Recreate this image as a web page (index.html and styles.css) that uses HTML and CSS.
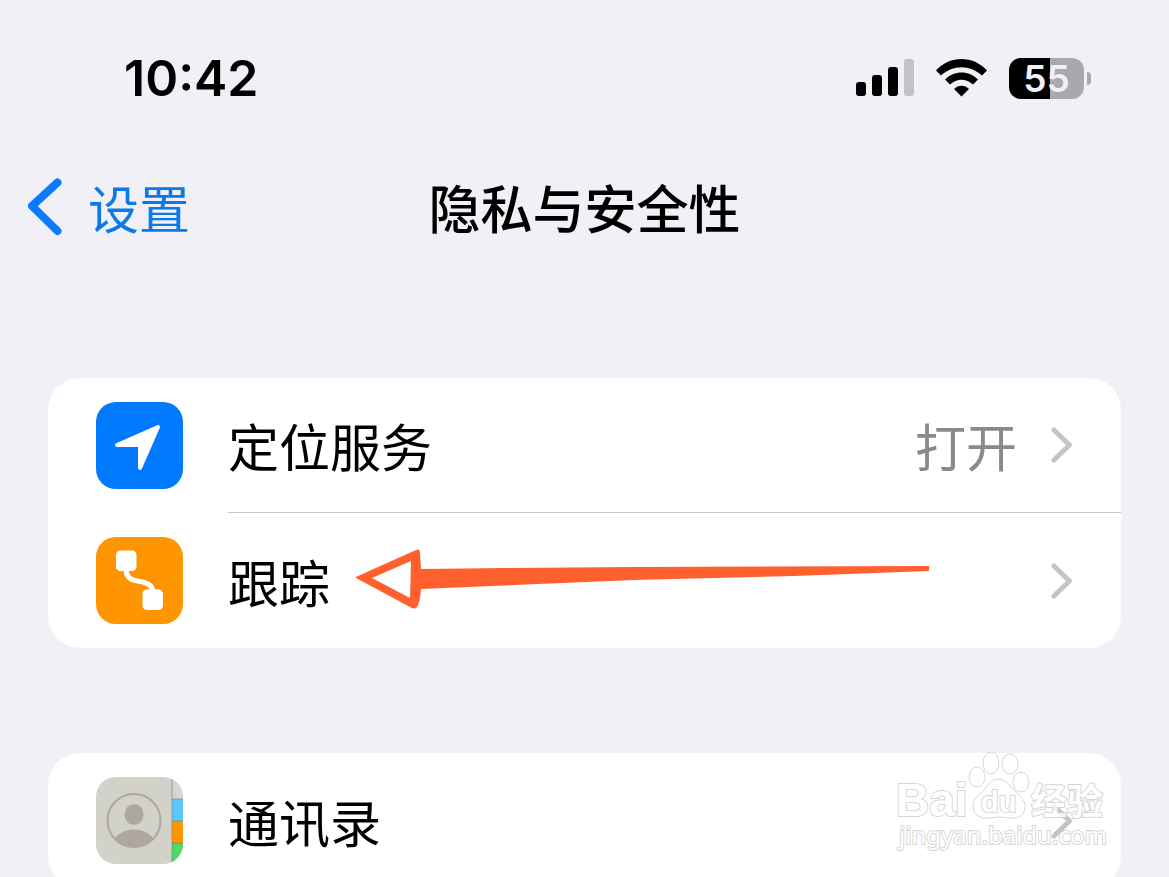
FILE: index.html
```html
<!DOCTYPE html>
<html lang="zh-CN">
  <head>
    <meta charset="utf-8" />
    <meta name="viewport" content="width=device-width, initial-scale=1" />
    <title>隐私与安全性</title>
    <link rel="stylesheet" href="styles.css">
  </head>
  <body>
    <div class="statusbar">
      <span class="time">10:42</span>
      <div class="indicators">
        <svg class="signal" width="58" height="38" viewBox="0 0 58 38">
          <rect x="0" y="23" width="10" height="14" rx="3" />
          <rect x="16" y="16" width="10" height="21" rx="3" />
          <rect x="32" y="8" width="10" height="29" rx="3" />
          <rect class="off" x="48" y="0" width="10" height="37" rx="3" />
        </svg>
        <svg class="wifi" width="51" height="38" viewBox="0 0 51 38">
          <path d="M0 11.500C14 -3.800 37 -3.800 51 11.500L46 16.500C34 5.500 17 5.500 5 16.500Z" />
          <path d="M9 20.500C18 11 33 11 42 20.500L37 25.500C30 19 21 19 14 25.500Z" />
          <path d="M18 30C22 25.500 29 25.500 33 30L25.500 37.500Z" />
        </svg>
        <div class="battery"><span class="level">55</span></div>
      </div>
    </div>

    <header class="navbar">
      <a class="back" href="#">
        <svg width="34" height="58" viewBox="0 0 34 58">
          <path d="M29.500 4.500L4 28L29.500 53" />
        </svg>
        设置
      </a>
      <h1>隐私与安全性</h1>
    </header>

    <main>
      <div class="card">
        <a class="row" href="#">
          <svg class="icon" viewBox="0 0 87 87">
            <rect width="87" height="87" rx="20" fill="#007aff" />
            <path d="M21 43L62 25L44 66V43Z" fill="#fff" stroke="#fff" stroke-width="4" stroke-linejoin="round" />
          </svg>
          <span class="line">
            <span class="label">定位服务</span>
            <span class="value">打开</span>
            <svg class="chevron" viewBox="0 0 22 36"><path d="M3 3L18.500 18L3 33" /></svg>
          </span>
        </a>
        <a class="row" href="#">
          <svg class="icon" viewBox="0 0 87 87">
            <rect width="87" height="87" rx="20" fill="#ff9500" />
            <rect x="20" y="13.500" width="20.500" height="20.500" rx="4.500" fill="#fff" />
            <rect x="46.500" y="52.500" width="20.500" height="20.500" rx="4.500" fill="#fff" />
            <path d="M30 33C31 50 54 39 57 54" fill="none" stroke="#fff" stroke-width="5" />
          </svg>
          <span class="line">
            <span class="label">跟踪</span>
            <svg class="chevron" viewBox="0 0 22 36"><path d="M3 3L18.500 18L3 33" /></svg>
          </span>
          <svg class="arrow" width="576" height="62" viewBox="0 0 576 62">
            <path fill-rule="evenodd" d="M2 30Q1 29 4 28L62 2Q66 0 66 5L67 21L150 20L280 19L575 18V23L440 28L280 32L67 41Q66 55 63 59Q61 62 56 59ZM18 30L56 50L57 13Z" />
          </svg>
        </a>
      </div>

      <div class="card">
        <a class="row" href="#">
          <svg class="icon" viewBox="0 0 87 87">
            <clipPath id="book"><rect width="87" height="87" rx="20" /></clipPath>
            <clipPath id="portrait"><circle cx="38" cy="43.500" r="26.500" /></clipPath>
            <g clip-path="url(#book)">
              <rect width="87" height="87" fill="#d2d1ca" />
              <rect x="76" width="11" height="22" fill="#d6d5d3" />
              <rect x="76" y="22" width="11" height="22" fill="#5ac8fa" />
              <rect x="76" y="44" width="11" height="22" fill="#ff9500" />
              <rect x="76" y="66" width="11" height="21" fill="#4cd964" />
              <path d="M76 0V87M76 22H87M76 44H87M76 66H87" stroke="#7d7a72" stroke-opacity=".6" />
              <g clip-path="url(#portrait)" fill="#aea6a1">
                <ellipse cx="38" cy="37.500" rx="9.500" ry="10.500" />
                <ellipse cx="38" cy="68" rx="21" ry="15.500" />
              </g>
              <circle cx="38" cy="43.500" r="26.500" fill="none" stroke="#aea6a1" stroke-width="2" />
            </g>
          </svg>
          <span class="line">
            <span class="label">通讯录</span>
            <svg class="chevron" viewBox="0 0 22 36"><path d="M3 3L18.500 18L3 33" /></svg>
          </span>
        </a>
        <svg class="watermark" width="216" height="108" viewBox="0 0 216 108">
          <ellipse cx="84" cy="29" rx="8" ry="10" />
          <ellipse cx="98" cy="15" rx="8" ry="11" />
          <ellipse cx="117" cy="16" rx="8" ry="10" />
          <ellipse cx="128" cy="34" rx="8" ry="10" />
          <path d="M105 31C113 31 117 38 122 43C129 49 133 54 132 60C131 69 123 71 117 70Q106 68 96 70C86 71 80 66 80 58C80 51 86 47 91 42C96 36 98 31 105 31Z" />
          <text class="brand" x="3" y="68">Bai</text>
          <text class="du" x="88" y="64">du</text>
          <text class="jingyan" x="138" y="67">经验</text>
          <text class="site" x="6" y="96">jingyan.baidu.com</text>
        </svg>
      </div>
    </main>
  </body>
</html>
```

FILE: styles.css
```css
* {
  box-sizing: border-box;
}

body {
  margin: 0;
  height: 100vh;
  overflow: hidden;
  background-color: #f1f0f6;
  color: #000;
  font-family: "Noto Sans CJK SC", sans-serif;
  font-size: 51px;
  line-height: 72px;
}

a {
  color: inherit;
  text-decoration: none;
}

/* status bar */
.statusbar {
  display: flex;
  align-items: center;
  justify-content: space-between;
  height: 156px;
  padding: 0 78px 0 124px;
  font-family: Inter, sans-serif;
}

.time {
  font-size: 50px;
  font-weight: 600;
}

.indicators {
  display: flex;
  align-items: center;
  gap: 22px;
}

.signal .off {
  fill: #c3c2c8;
}

.battery {
  display: flex;
  align-items: center;
  gap: 3px;
}

.battery::after {
  content: "";
  width: 4px;
  height: 13px;
  border-radius: 0 4px 4px 0;
  background-color: #a9a8ae;
}

.level {
  width: 75px;
  height: 41px;
  border-radius: 12px;
  background: linear-gradient(to right, #000 55%, #a9a8ae 55%);
  color: #f1f0f6;
  font-size: 37px;
  font-weight: 600;
  line-height: 41px;
  text-align: center;
}

/* navigation bar */
.navbar {
  display: grid;
  grid-template-columns: 1fr auto 1fr;
  align-items: center;
  height: 102px;
  padding: 0 28px;
}

.back {
  display: flex;
  align-items: center;
  gap: 26px;
  color: #0a7aea;
}

.back path {
  fill: none;
  stroke: #0a7aff;
  stroke-width: 8;
  stroke-linecap: round;
  stroke-linejoin: round;
}

h1 {
  margin: 0;
  font-size: 52px;
  font-weight: 500;
}

/* lists */
main {
  display: flex;
  flex-direction: column;
  gap: 105px;
  padding: 120px 48px 48px;
}

.card {
  position: relative;
  border-radius: 32px;
  background-color: #fff;
}

.row {
  position: relative;
  display: flex;
  align-items: center;
  gap: 45px;
  height: 135px;
  padding-left: 48px;
}

.icon {
  flex: none;
  width: 87px;
  height: 87px;
}

.line {
  display: flex;
  flex: 1;
  align-items: center;
  height: 100%;
  padding-right: 48px;
}

.row:not(:last-of-type) .line {
  border-bottom: 1px solid #c6c6c8;
}

.label {
  flex: 1;
}

.value {
  margin-right: 34px;
  color: #8a8a8e;
}

.chevron {
  width: 22px;
  height: 36px;
}

.chevron path {
  fill: none;
  stroke: #c4c4c6;
  stroke-width: 5;
  stroke-linecap: round;
  stroke-linejoin: round;
}

/* hand-drawn pointer */
.arrow {
  position: absolute;
  top: 35px;
  left: 306px;
  fill: #ff612e;
}

/* watermark */
.watermark {
  position: absolute;
  top: -5px;
  right: 12px;
  fill: #fff;
  stroke: #cdcdcd;
  stroke-width: 1;
  opacity: .8;
}

.watermark text {
  paint-order: stroke;
  stroke-width: 2;
}

.brand {
  font: bold 46px "Liberation Sans", sans-serif;
}

.du {
  font: bold 29px "Liberation Sans", sans-serif;
}

.jingyan {
  font: bold 36px "Noto Sans CJK SC", sans-serif;
}

.site {
  font: 24px "Noto Sans", sans-serif;
}
```
